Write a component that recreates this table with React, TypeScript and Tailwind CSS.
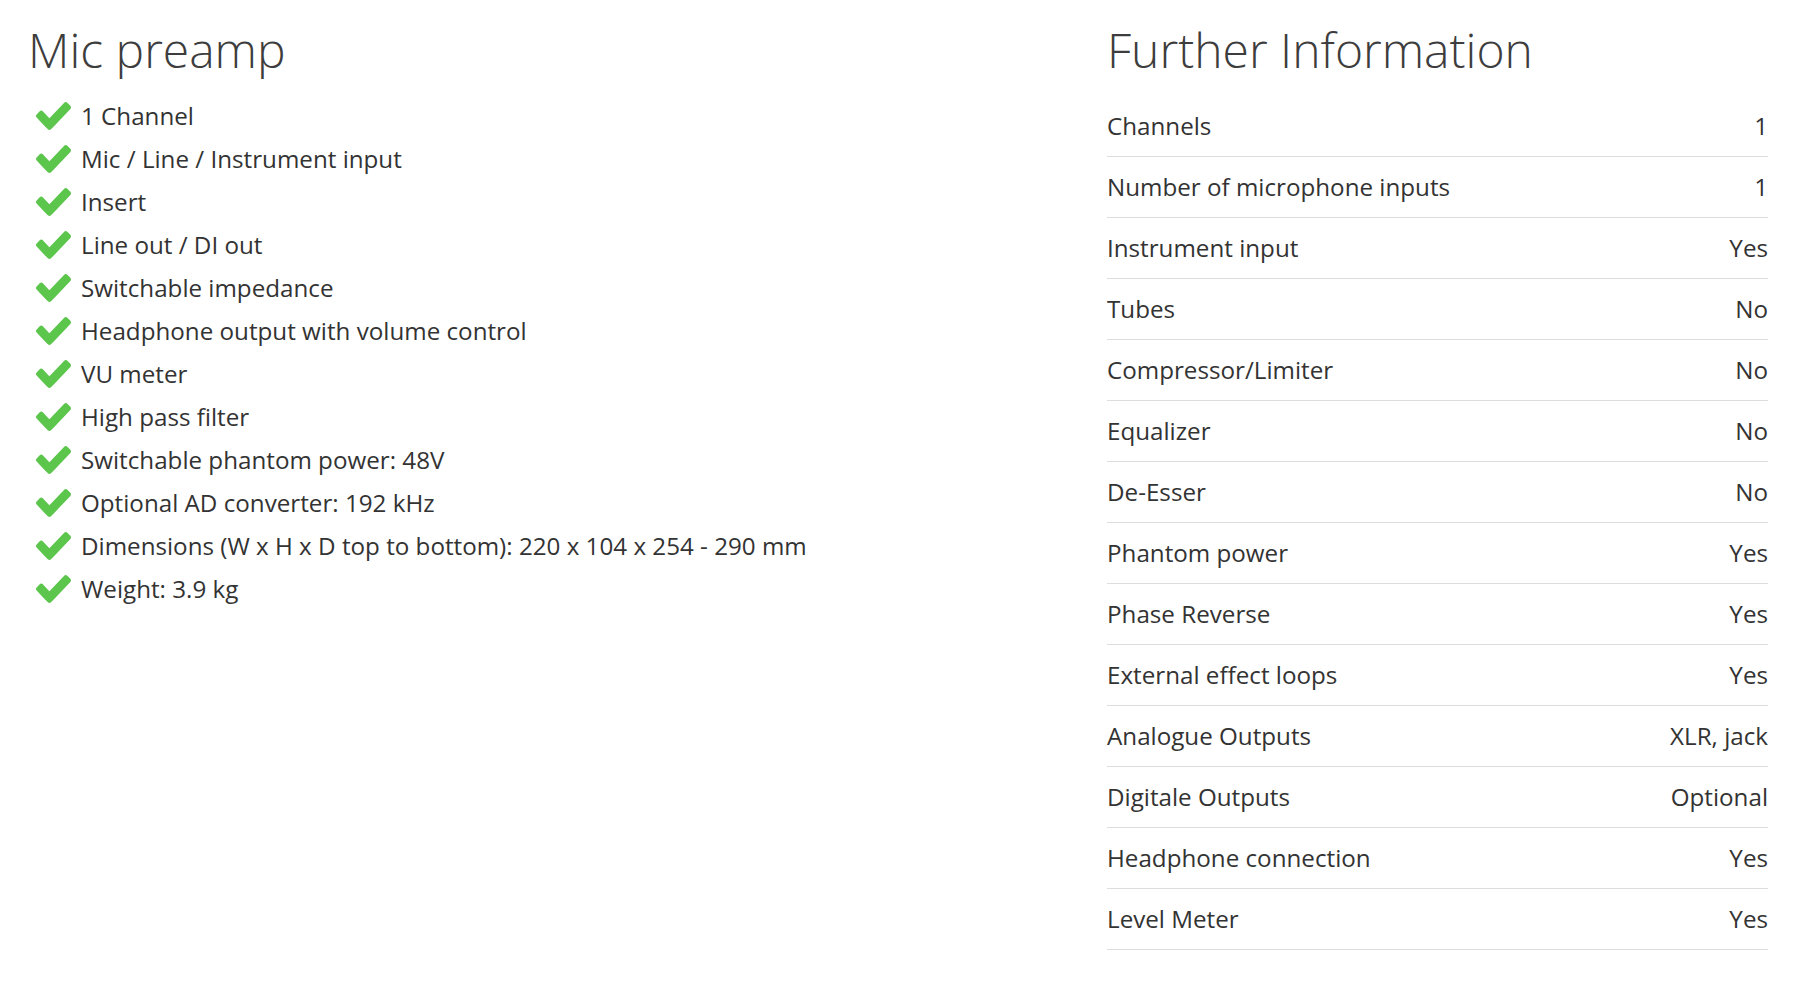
import React from 'react'

const FEATURES = [
  '1 Channel',
  'Mic / Line / Instrument input',
  'Insert',
  'Line out / DI out',
  'Switchable impedance',
  'Headphone output with volume control',
  'VU meter',
  'High pass filter',
  'Switchable phantom power: 48V',
  'Optional AD converter: 192 kHz',
  'Dimensions (W x H x D top to bottom): 220 x 104 x 254 - 290 mm',
  'Weight: 3.9 kg',
]

const SPECS: [string, string][] = [
  ['Channels', '1'],
  ['Number of microphone inputs', '1'],
  ['Instrument input', 'Yes'],
  ['Tubes', 'No'],
  ['Compressor/Limiter', 'No'],
  ['Equalizer', 'No'],
  ['De-Esser', 'No'],
  ['Phantom power', 'Yes'],
  ['Phase Reverse', 'Yes'],
  ['External effect loops', 'Yes'],
  ['Analogue Outputs', 'XLR, jack'],
  ['Digitale Outputs', 'Optional'],
  ['Headphone connection', 'Yes'],
  ['Level Meter', 'Yes'],
]

// check glyph, same shape as the old icon-font "check"
function CheckIcon() {
  return (
    <svg
      className="h-[28px] w-[35px] shrink-0 text-[#5cc54c]"
      viewBox="121 334 1550 1188"
      preserveAspectRatio="none"
      fill="currentColor"
      aria-hidden="true"
    >
      <path d="M1671 566q0 40-28 68l-724 724-136 136q-28 28-68 28t-68-28l-136-136-362-362q-28-28-28-68t28-68l136-136q28-28 68-28t68 28l294 295 656-657q28-28 68-28t68 28l136 136q28 28 28 68z" />
    </svg>
  )
}

export default function App() {
  return (
    <div className="min-h-screen bg-white font-['Open_Sans',sans-serif] text-[#333]">
      <div className="flex pl-[28px] pr-[39px] pt-[26px]">
        {/* Feature list */}
        <section className="flex-1">
          <h2 className="text-[48px] font-light leading-[48px] text-[#3d3d3d]">Mic preamp</h2>
          <ul className="mt-[20px]">
            {FEATURES.map((item) => (
              <li key={item} className="flex h-[43px] items-center gap-[10px] pl-[8px]">
                <CheckIcon />
                <span className="text-[24.2px] leading-[43px]">{item}</span>
              </li>
            ))}
          </ul>
        </section>

        {/* Spec table */}
        <section className="w-[661px]">
          <h2 className="text-[48px] font-light leading-[48px] text-[#3d3d3d]">Further Information</h2>
          <div className="mt-[22px]">
            {SPECS.map(([label, value]) => (
              <div
                key={label}
                className="flex h-[61px] items-center justify-between border-b border-[#dddddd] text-[24.2px]"
              >
                <span>{label}</span>
                <span>{value}</span>
              </div>
            ))}
          </div>
        </section>
      </div>
    </div>
  )
}
